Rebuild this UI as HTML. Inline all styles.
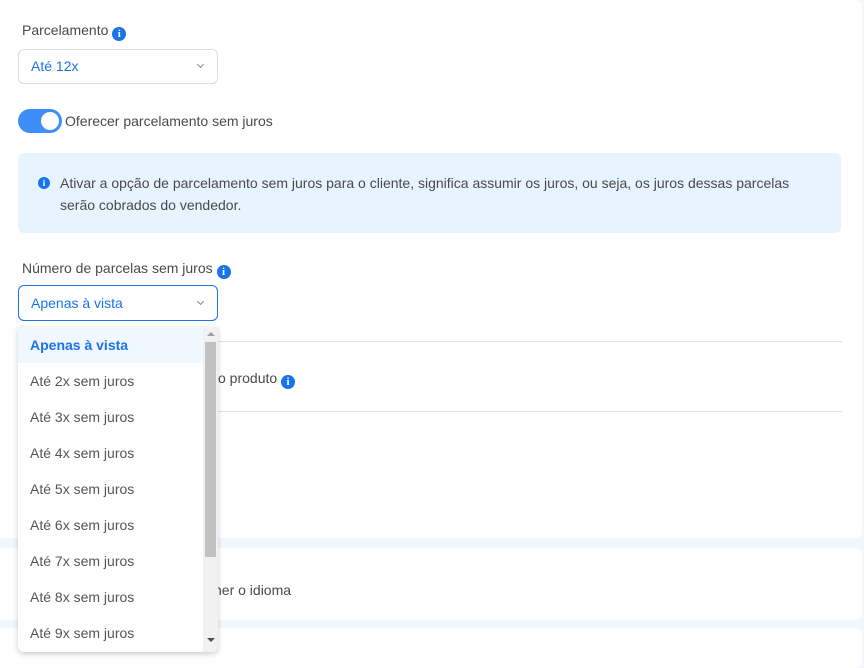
<!DOCTYPE html>
<html><head><meta charset="utf-8"><style>
body{margin:0;width:864px;height:657px;background:#f3f7fd;font-family:"Liberation Sans",sans-serif;position:relative;overflow:hidden;color:#4a4a4a}
.abs{position:absolute}
.card{position:absolute;left:0;width:862px;background:#fff;border-radius:0 6px 6px 0}
.info{display:inline-block;width:14px;height:14px;border-radius:50%;background:#1a73e8;color:#fff;font:bold 11px/14px "Liberation Serif",serif;text-align:center;vertical-align:-2px}
.sel{position:absolute;left:18px;width:200px;height:35px;border:1px solid #ddd;border-radius:6px;background:#fff;color:#1a73e8;font-size:14px;line-height:33px;box-sizing:border-box;padding-left:12px}
.chev{position:absolute;right:14px;top:12px;width:4px;height:4px;border-right:1.8px solid #888;border-bottom:1.8px solid #888;transform:rotate(45deg)}
.opt{height:36px;line-height:36px;padding-left:12px;font-size:14px;color:#555}
</style></head><body>
<div class="card" style="top:0;height:538px"></div>
<div class="card" style="top:548px;height:72px"></div>
<div class="card" style="top:628px;height:40px"></div>
<div class="abs" style="left:22px;top:22px;font-size:14px">Parcelamento <span class="info">i</span></div>
<div class="sel" style="top:49px">Até 12x<div class="chev"></div></div>
<div class="abs" style="left:18px;top:109px;width:44px;height:24px;border-radius:12px;background:#3d8ef7"><div class="abs" style="right:3px;top:3px;width:18px;height:18px;border-radius:50%;background:#fff"></div></div>
<div class="abs" style="left:65px;top:113px;font-size:14px">Oferecer parcelamento sem juros</div>
<div class="abs" style="left:18px;top:153px;width:823px;height:80px;background:#e7f3fe;border-radius:6px"></div>
<div class="abs" style="left:38px;top:177px;width:12px;height:12px;border-radius:50%;background:#1a73e8;color:#fff;font:bold 9px/12px serif;text-align:center">i</div>
<div class="abs" style="left:60px;top:172px;font-size:14px;line-height:22px;width:760px">Ativar a opção de parcelamento sem juros para o cliente, significa assumir os juros, ou seja, os juros dessas parcelas serão cobrados do vendedor.</div>
<div class="abs" style="left:22px;top:260px;font-size:14px">Número de parcelas sem juros <span class="info">i</span></div>
<div class="sel" style="top:285px;height:36px;line-height:34px;border-color:#1a73e8">Apenas à vista<div class="chev" style="top:13px"></div></div>
<div class="abs" style="left:218px;top:341px;width:624px;height:1px;background:#e3e3e3"></div>
<div class="abs" style="left:218px;top:411px;width:624px;height:1px;background:#e3e3e3"></div>
<div class="abs" style="left:218px;top:370px;font-size:14px">o produto <span class="info">i</span></div>
<div class="abs" style="left:214px;top:582px;font-size:14px">ner o idioma</div>
<div class="abs" style="left:18px;top:327px;width:200px;height:325px;background:#fff;border-radius:0 0 6px 6px;box-shadow:0 2px 6px rgba(0,0,0,.2);overflow:hidden">
<div class="opt" style="background:#f0f7fe;color:#1a73e8;font-weight:bold;width:185px">Apenas à vista</div>
<div class="opt">Até 2x sem juros</div><div class="opt">Até 3x sem juros</div><div class="opt">Até 4x sem juros</div><div class="opt">Até 5x sem juros</div><div class="opt">Até 6x sem juros</div><div class="opt">Até 7x sem juros</div><div class="opt">Até 8x sem juros</div><div class="opt">Até 9x sem juros</div>
<div class="abs" style="left:185px;top:0;width:15px;height:325px;background:#f1f1f1"></div>
<div class="abs" style="left:187px;top:15px;width:11px;height:215px;background:#c1c1c1"></div>
<div class="abs" style="left:189px;top:5px;border:4px solid transparent;border-bottom:4px solid #a0a0a0;border-top:0"></div>
<div class="abs" style="left:189px;top:311px;border:4px solid transparent;border-top:4px solid #505050;border-bottom:0"></div>
</div>
</body></html>
